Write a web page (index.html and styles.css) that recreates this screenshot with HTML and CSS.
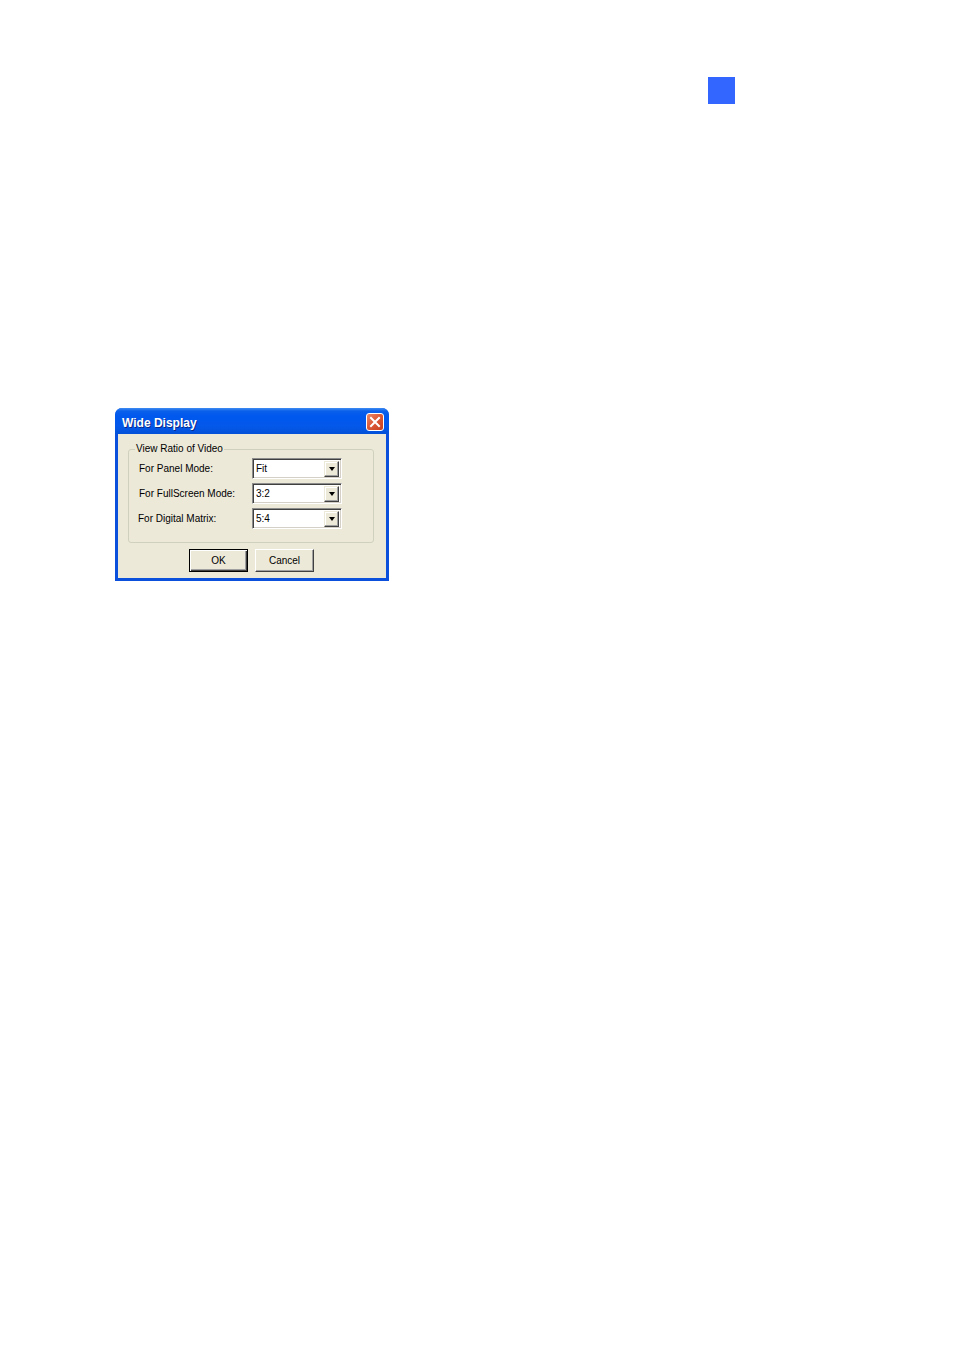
FILE: index.html
```html
<!DOCTYPE html>
<html>
<head>
<meta charset="utf-8">
<link rel="stylesheet" href="styles.css">
</head>
<body>
<div class="page">
  <div class="marker"></div>
  <div class="dialog">
    <div class="titlebar">
      <span class="title">Wide Display</span>
      <span class="close">
        <svg width="16" height="16" viewBox="0 0 16 16"><path d="M4 4 L12 12 M12 4 L4 12" stroke="#fff" stroke-width="2" stroke-linecap="square"/></svg>
      </span>
    </div>
    <div class="body">
      <fieldset class="group">
        <legend class="legend">View Ratio of Video</legend>
        <div class="row">
          <span class="label">For Panel Mode:</span>
          <div class="combo"><span class="value">Fit</span><span class="drop"><i class="tri"></i></span></div>
        </div>
        <div class="row">
          <span class="label">For FullScreen Mode:</span>
          <div class="combo"><span class="value">3:2</span><span class="drop"><i class="tri"></i></span></div>
        </div>
        <div class="row">
          <span class="label shift">For Digital Matrix:</span>
          <div class="combo"><span class="value">5:4</span><span class="drop"><i class="tri"></i></span></div>
        </div>
      </fieldset>
      <div class="buttons">
        <div class="btn default">OK</div>
        <div class="btn">Cancel</div>
      </div>
    </div>
  </div>
</div>
</body>
</html>
```

FILE: styles.css
```css
html, body {
  margin: 0;
  padding: 0;
  background: #ffffff;
}
.page {
  padding-top: 77px;
  font-family: "Liberation Sans", Arial, sans-serif;
}
.marker {
  width: 27px;
  height: 27px;
  margin-left: 708px;
  background: #3366ff;
}
.dialog {
  margin-top: 304px;
  margin-left: 115px;
  width: 274px;
  background: #0b4fdd;
  border-radius: 7px 7px 0 0;
  overflow: hidden;
}
.titlebar {
  height: 26px;
  display: flex;
  align-items: flex-start;
  justify-content: space-between;
  padding: 0 5px 0 7px;
  background: linear-gradient(#3f8cf3 0px, #0a60ea 3px, #0058ee 8px, #0458ea 18px, #0351d8 26px);
  box-sizing: border-box;
}
.title {
  color: #ffffff;
  font-weight: bold;
  font-size: 12px;
  line-height: 14px;
  margin-top: 8px;
  text-shadow: 1px 1px 0 #0a2a8a;
}
.close {
  margin-top: 5px;
  width: 18px;
  height: 18px;
  box-sizing: border-box;
  border: 1px solid #ffffff;
  border-radius: 3px;
  background: linear-gradient(135deg, #e8896a 0%, #dc5a38 45%, #c8401f 100%);
  display: flex;
  align-items: center;
  justify-content: center;
}
.close svg {
  display: block;
}
.body {
  margin: 0 3px 3px 3px;
  background: #ece9d8;
  padding: 9px 12px 6px 10px;
  font-size: 10px;
  color: #000;
}
.group {
  margin: 0;
  padding: 3px 10px 13px 10px;
  border: 1px solid #d0d0bf;
  border-radius: 3px;
  display: flex;
  flex-direction: column;
  gap: 4px;
}
.legend {
  padding: 0 1px;
  margin-left: -4px;
  font-size: 10px;
  line-height: 12px;
  color: #000;
}
.row {
  display: flex;
  align-items: center;
}
.label {
  width: 113px;
  line-height: 12px;
}
.label.shift {
  margin-left: -1px;
  width: 114px;
}
.combo {
  width: 90px;
  height: 21px;
  box-sizing: border-box;
  background: #ffffff;
  border-top: 1px solid #8c8c8c;
  border-left: 1px solid #8c8c8c;
  border-right: 1px solid #ffffff;
  border-bottom: 1px solid #ffffff;
  box-shadow: inset 1px 1px 0 #404040, inset -1px -1px 0 #d4d0c8;
  display: flex;
  align-items: center;
  justify-content: space-between;
  padding: 2px 2px 2px 2px;
}
.value {
  padding-left: 1px;
  font-size: 10px;
  line-height: 12px;
}
.drop {
  width: 15px;
  height: 16px;
  box-sizing: border-box;
  background: #ece9d8;
  border-top: 1px solid #ece9d8;
  border-left: 1px solid #ece9d8;
  border-right: 1px solid #404040;
  border-bottom: 1px solid #404040;
  box-shadow: inset -1px -1px 0 #a0a0a0, inset 1px 1px 0 #ffffff;
  display: flex;
  align-items: center;
  justify-content: center;
}
.tri {
  display: block;
  width: 0;
  height: 0;
  border-left: 3.5px solid transparent;
  border-right: 3.5px solid transparent;
  border-top: 4px solid #000;
  margin-top: 1px;
}
.buttons {
  margin-top: 6px;
  display: flex;
  justify-content: center;
  gap: 7px;
  padding-left: 1px;
}
.btn {
  width: 59px;
  height: 23px;
  box-sizing: border-box;
  display: flex;
  align-items: center;
  justify-content: center;
  font-size: 10px;
  background: #ece9d8;
  border-top: 1px solid #ffffff;
  border-left: 1px solid #ffffff;
  border-right: 1px solid #404040;
  border-bottom: 1px solid #404040;
  box-shadow: inset -1px -1px 0 #a0a0a0;
}
.btn.default {
  border: 1px solid #000000;
  box-shadow: inset 1px 1px 0 #ffffff, inset -1px -1px 0 #404040, inset -2px -2px 0 #a0a0a0;
}
```
